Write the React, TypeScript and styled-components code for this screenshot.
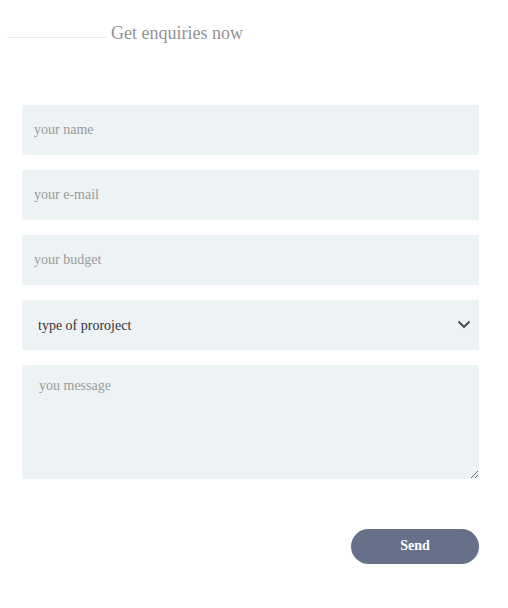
import React from 'react'
import styled, { createGlobalStyle } from 'styled-components'

const GlobalStyle = createGlobalStyle`
  body {
    margin: 0;
    background: #fff;
    font-family: 'Liberation Serif', 'Times New Roman', serif;
  }
`

const Page = styled.div`
  width: 508px;
  padding: 22px 0 40px;
`

const Heading = styled.div`
  display: flex;
  align-items: center;
  gap: 5px;
  padding-left: 7px;
  height: 22px;
  .rule {
    width: 99px;
    height: 1px;
    background: #e1e8ec;
    margin-top: 8px;
  }
  h2 {
    margin: 0;
    font-weight: normal;
    font-size: 18px;
    color: #939393;
  }
`

const Form = styled.form`
  display: flex;
  flex-direction: column;
  gap: 15px;
  width: 457px;
  margin: 61px 0 0 22px;
`

const fieldBase = `
  box-sizing: border-box;
  width: 100%;
  border: none;
  outline: none;
  background: #edf2f5;
  font-family: 'Liberation Serif', 'Times New Roman', serif;
  font-size: 14px;
  color: #333;
  &::placeholder {
    color: #9a9a9a;
  }
`

const Input = styled.input`
  ${fieldBase}
  height: 50px;
  padding: 0 12px;
`

const SelectWrap = styled.div`
  position: relative;
  svg {
    position: absolute;
    right: 8px;
    top: 20px;
    pointer-events: none;
  }
`

const Select = styled.select`
  ${fieldBase}
  appearance: none;
  height: 50px;
  padding: 0 16px;
  color: #333;
`

const Message = styled.textarea`
  ${fieldBase}
  display: block;
  height: 114px;
  padding: 13px 17px;
  resize: vertical;
`

const Actions = styled.div`
  display: flex;
  justify-content: flex-end;
  margin-top: 35px;
`

const SendButton = styled.button`
  width: 128px;
  height: 35px;
  border: none;
  border-radius: 18px;
  background: #667089;
  color: #fff;
  font-family: 'Liberation Serif', 'Times New Roman', serif;
  font-weight: bold;
  font-size: 14px;
  padding-bottom: 2px;
  cursor: pointer;
`

const App: React.FC = () => {
  return (
    <Page>
      <GlobalStyle />
      <Heading>
        <span className="rule" />
        <h2>Get enquiries now</h2>
      </Heading>
      <Form onSubmit={(e) => e.preventDefault()}>
        <Input placeholder="your name" />
        <Input placeholder="your e-mail" />
        <Input placeholder="your budget" />
        <SelectWrap>
          <Select defaultValue="">
            <option value="">type of proroject</option>
            <option value="web">website</option>
            <option value="app">application</option>
          </Select>
          <svg width="14" height="9" viewBox="0 0 14 9">
            <path d="M1.5 1.5 L7 7 L12.5 1.5" fill="none" stroke="#4a4f57" strokeWidth="2" />
          </svg>
        </SelectWrap>
        <Message placeholder="you message" />
        <Actions>
          <SendButton type="submit">Send</SendButton>
        </Actions>
      </Form>
    </Page>
  )
}

export default App
